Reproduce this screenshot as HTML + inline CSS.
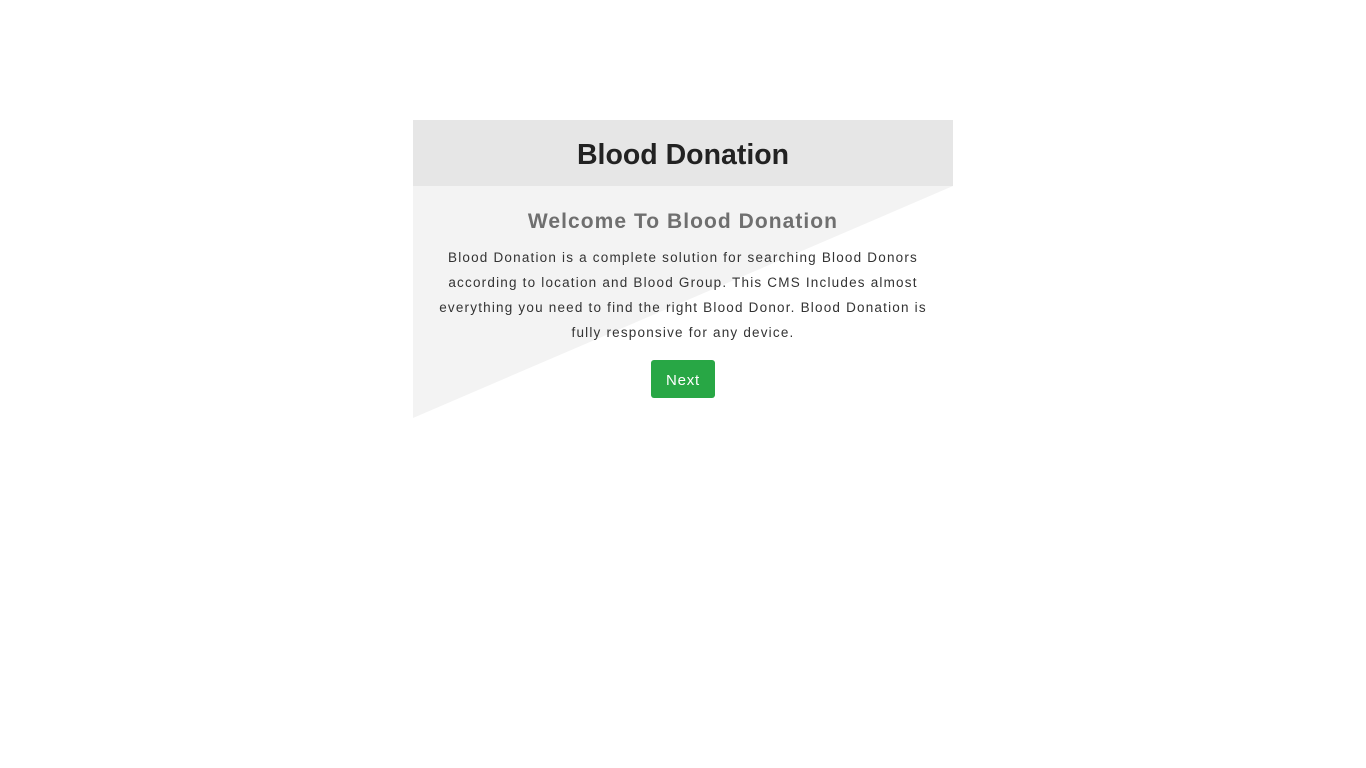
<!DOCTYPE html>
<html><head><style>
html,body{margin:0;padding:0;background:#fff;width:1366px;height:768px;overflow:hidden;font-family:"Liberation Sans",sans-serif;}
.card{position:absolute;left:413px;top:120px;width:540px;height:298px;}
.head{height:66px;background:#e6e6e6;text-align:center;font-size:28.5px;font-weight:bold;color:#222;line-height:70px;}
.tri{position:absolute;left:0;top:66px;}
.h2{position:absolute;top:90px;left:0;width:540px;text-align:center;font-size:21px;font-weight:bold;color:#6f6f6f;letter-spacing:1.05px;}
.p{position:absolute;top:125px;left:0;width:540px;text-align:center;font-size:13.5px;line-height:25px;color:#333;letter-spacing:1.2px;white-space:nowrap;}
.btn{position:absolute;left:238px;top:240px;width:64px;height:38px;background:#28a745;color:#fff;border-radius:3px;text-align:center;line-height:42px;font-size:15px;letter-spacing:0.8px;}
</style></head><body>
<div class="card">
<div class="head">Blood Donation</div>
<svg class="tri" width="540" height="232"><polygon points="0,0 540,0 0,232" fill="#f3f3f3"/></svg>
<div class="h2">Welcome To Blood Donation</div>
<div class="p">Blood Donation is a complete solution for searching Blood Donors<br>according to location and Blood Group. This CMS Includes almost<br>everything you need to find the right Blood Donor. Blood Donation is<br>fully responsive for any device.</div>
<div class="btn">Next</div>
</div>
</body></html>
